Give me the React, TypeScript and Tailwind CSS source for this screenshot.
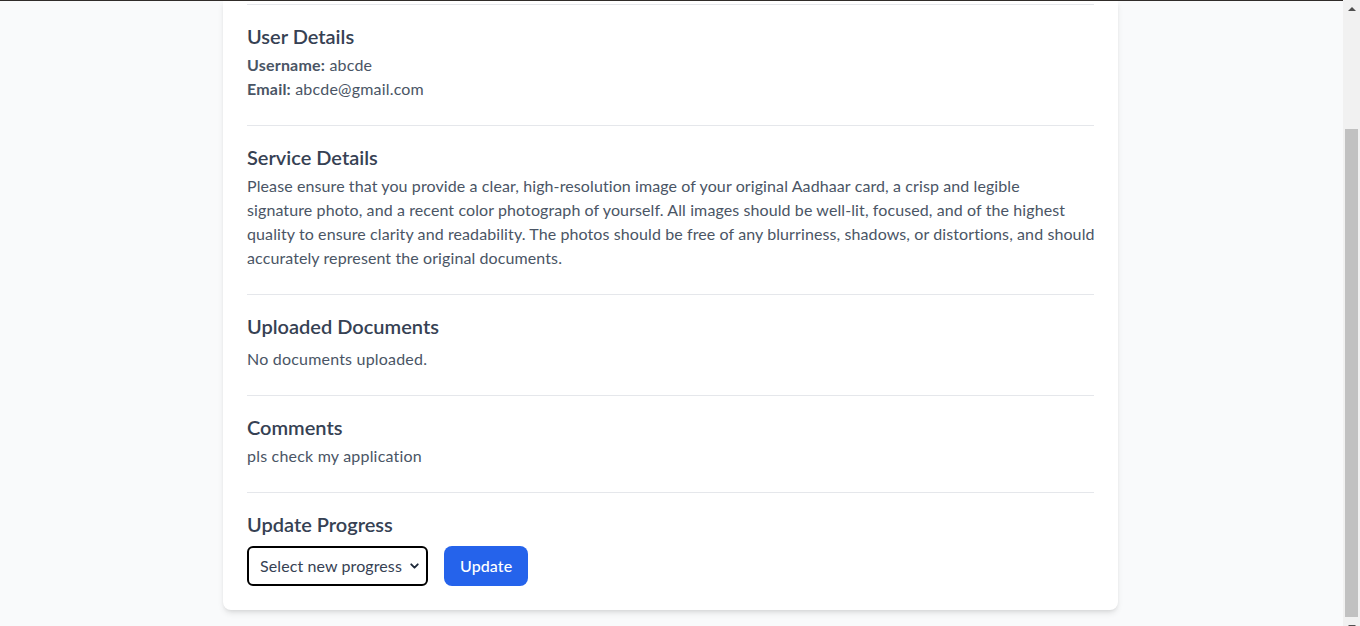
import { ChevronDown } from "lucide-react";

// kept as separate lines so the wrap matches the original layout
const serviceLines = [
  "Please ensure that you provide a clear, high-resolution image of your original Aadhaar card, a crisp and legible",
  "signature photo, and a recent color photograph of yourself. All images should be well-lit, focused, and of the highest",
  "quality to ensure clarity and readability. The photos should be free of any blurriness, shadows, or distortions, and should",
  "accurately represent the original documents.",
];

function Section({ title, children }: { title: string; children: React.ReactNode }) {
  return (
    <section className="border-t border-gray-200 pt-[17px] pb-6 last:pb-0">
      <h2 className="text-xl leading-7 font-semibold text-gray-700">{title}</h2>
      {children}
    </section>
  );
}

function Arrow({ up }: { up?: boolean }) {
  return (
    <svg width="8" height="4" viewBox="0 0 8 4" className="block">
      <polygon points={up ? "0,4 8,4 4,0" : "0,0 8,0 4,4"} fill="#505050" />
    </svg>
  );
}

// window scrollbar, page is scrolled to the bottom
function Scrollbar() {
  return (
    <div className="flex h-screen w-[17px] shrink-0 flex-col overflow-hidden bg-[#f1f1f1]">
      <div className="flex h-[17px] shrink-0 items-center justify-center">
        <Arrow up />
      </div>
      <div className="flex-1 pt-[112px]">
        <div className="mx-[2px] h-[488px] bg-[#c1c1c1]" />
        <div className="flex h-[17px] items-center justify-center pt-[2px]">
          <Arrow />
        </div>
      </div>
    </div>
  );
}

export default function App() {
  return (
    <div className="flex h-screen overflow-hidden bg-gray-50 font-[Lato,'Noto_Sans',sans-serif] text-gray-600">
      <main className="relative min-w-0 flex-1 pr-[2px]">
        <div className="absolute inset-x-0 top-0 h-px bg-[#302c29]" />
        <div className="mx-auto max-w-[895px] rounded-b-lg bg-white px-6 pt-[4px] pb-6 shadow-md">
          <Section title="User Details">
            <div className="mt-[3px] text-base leading-6 tracking-[0.2px]">
              <p>
                <span className="font-bold">Username:</span> abcde
              </p>
              <p>
                <span className="font-bold">Email:</span> abcde@gmail.com
              </p>
            </div>
          </Section>

          <Section title="Service Details">
            <p className="mt-[3px] text-base leading-6 tracking-[0.1px] whitespace-nowrap">
              {serviceLines.map((line, i) => (
                <span key={i}>
                  {line}
                  {i < serviceLines.length - 1 && <br />}
                </span>
              ))}
            </p>
          </Section>

          <Section title="Uploaded Documents">
            <p className="mt-[7px] text-base leading-6 tracking-[0.2px]">No documents uploaded.</p>
          </Section>

          <Section title="Comments">
            <p className="mt-[3px] text-base leading-6 tracking-[0.2px]">pls check my application</p>
          </Section>

          <Section title="Update Progress">
            <div className="mt-2 flex items-center gap-4">
              <div className="relative">
                <select
                  defaultValue=""
                  className="h-10 w-[181px] appearance-none rounded-md border-2 border-black bg-white pr-6 pl-[11px] text-base tracking-[0.1px] text-gray-700"
                >
                  <option value="">Select new progress</option>
                  <option value="review">Under Review</option>
                  <option value="approved">Approved</option>
                  <option value="rejected">Rejected</option>
                </select>
                <ChevronDown
                  className="pointer-events-none absolute top-1/2 right-[7px] h-[13px] w-[13px] -translate-y-1/2 text-gray-800"
                  strokeWidth={3.5}
                />
              </div>
              <button className="h-10 rounded-lg bg-[#2563eb] px-4 text-base font-medium tracking-[0.1px] text-white">
                Update
              </button>
            </div>
          </Section>
        </div>
      </main>
      <Scrollbar />
    </div>
  );
}
